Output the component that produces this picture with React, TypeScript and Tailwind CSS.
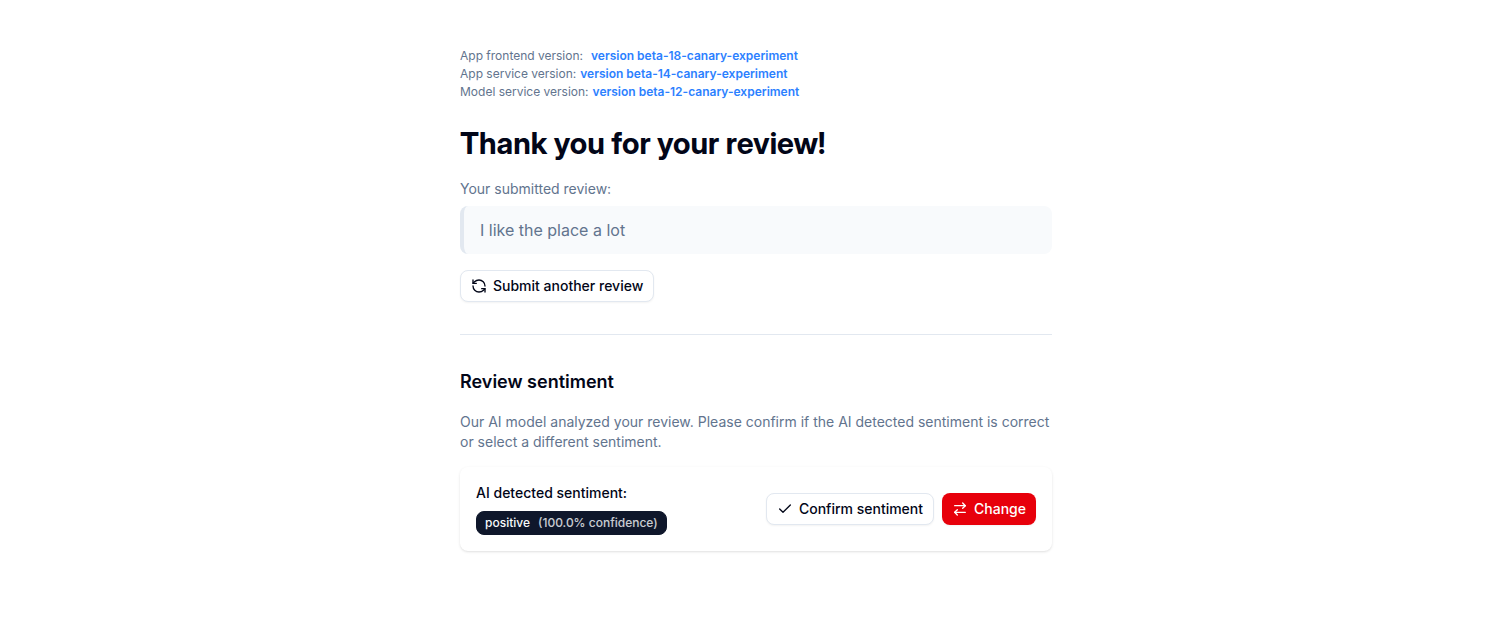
import { ArrowRightLeft, Check, RefreshCcw } from "lucide-react";

const versions = [
  { label: "App frontend version:", value: "version beta-18-canary-experiment", gap: "gap-2" },
  { label: "App service version:", value: "version beta-14-canary-experiment", gap: "gap-1" },
  { label: "Model service version:", value: "version beta-12-canary-experiment", gap: "gap-1" },
];

const outlineButton =
  "inline-flex h-8 items-center gap-1.5 rounded-lg border border-slate-200 bg-white px-2.5 text-sm font-medium text-[#020618] shadow-xs";

export default function App() {
  return (
    <main className="mx-auto w-full max-w-[640px] pt-[47px] pb-12 pl-[37px] pr-[11px] font-['Inter',sans-serif] text-[#020618]">
      <div className="text-xs text-slate-500">
        {versions.map((v) => (
          <p key={v.label} className={"flex h-[18px] items-center " + v.gap}>
            <span>{v.label}</span>
            <span className="font-semibold text-blue-500">{v.value}</span>
          </p>
        ))}
      </div>
      <h1 className="mt-6 font-['Inter_Display','Inter',sans-serif] text-3xl font-bold">Thank you for your review!</h1>
      <p className="mt-[18px] text-sm text-slate-500">Your submitted review:</p>
      <blockquote className="mt-[7px] rounded-lg border-l-4 border-slate-200 bg-slate-50 px-4 py-3 text-slate-500">
        I like the place a lot
      </blockquote>
      <button type="button" className={outlineButton + " mt-4"}>
        <RefreshCcw className="size-4" />
        Submit another review
      </button>
      <hr className="mt-8 mb-[33px] border-slate-200" />
      <h2 className="text-lg font-semibold">Review sentiment</h2>
      <p className="mt-4 text-sm text-slate-500">
        Our AI model analyzed your review. Please confirm if the AI detected sentiment is correct or select a different
        sentiment.
      </p>
      <section className="mt-[15px] flex flex-wrap items-center justify-between gap-4 rounded-lg p-4 shadow-sm">
        <div>
          <h3 className="text-sm font-medium">AI detected sentiment:</h3>
          <p className="mt-2 inline-flex h-6 items-center gap-2 rounded-lg border border-slate-900 bg-slate-900 px-2 text-xs font-medium text-slate-50">
            positive <span className="opacity-80">(100.0% confidence)</span>
          </p>
        </div>
        <div className="flex gap-2">
          <button type="button" className={outlineButton}>
            <Check className="size-4" />
            Confirm sentiment
          </button>
          <button
            type="button"
            className="inline-flex h-8 items-center gap-1.5 rounded-lg bg-[#e7000b] px-2.5 text-sm font-medium text-white shadow-xs"
          >
            <ArrowRightLeft className="size-4" />
            Change
          </button>
        </div>
      </section>
    </main>
  );
}
